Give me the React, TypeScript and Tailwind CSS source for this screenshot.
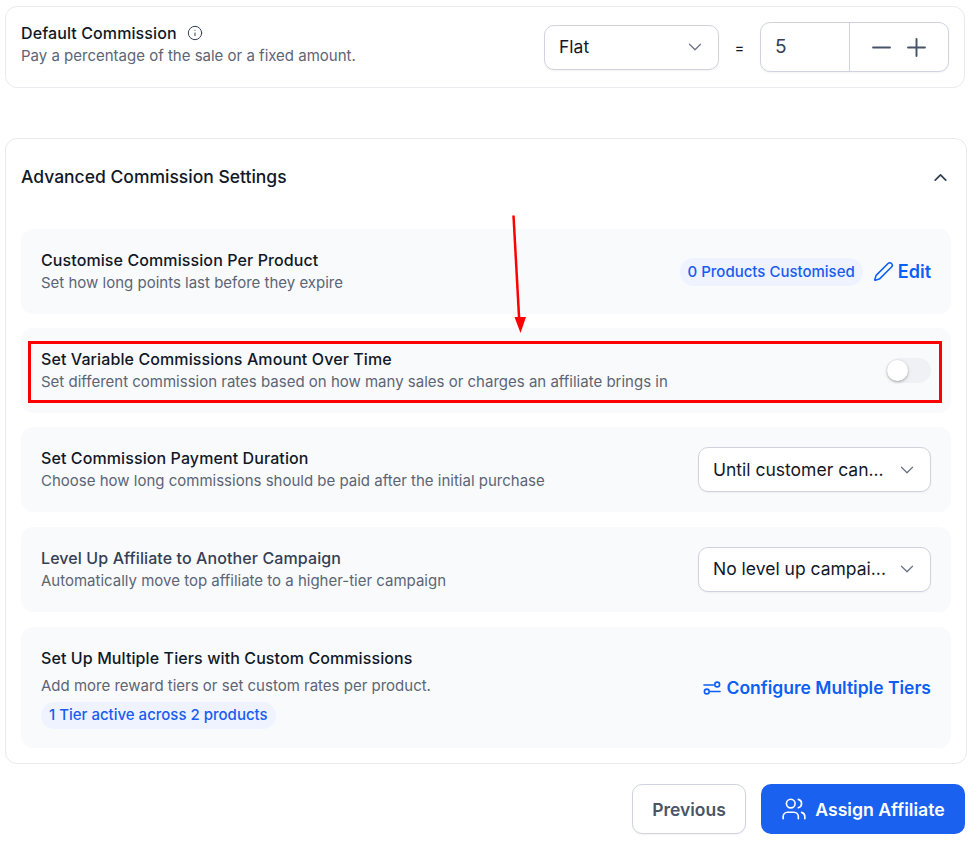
import { ChevronDown, ChevronUp, Info, Minus, Pen, Plus, Users } from "lucide-react";

const inter = "font-['Inter',sans-serif]";

function SelectBox({ label, className }: { label: string; className: string }) {
  return (
    <div className={`flex items-center justify-between rounded-[10px] border border-[#d0d3de] bg-white pl-[14px] pr-3 shadow-[0_1px_2px_rgba(16,24,40,0.05)] ${className}`}>
      <span className="text-[17.5px] leading-6 text-[#111827]">{label}</span>
      <ChevronDown className="h-[22px] w-[22px] text-[#667085]" strokeWidth={1.3} />
    </div>
  );
}

function Row({ title, desc, children, titleColor = "text-[#111827]" }: { title: string; desc: string; children: React.ReactNode; titleColor?: string }) {
  return (
    <div className="flex h-[85px] items-center justify-between rounded-xl bg-[#f9fafc] pl-5 pr-5">
      <div>
        <div className={`text-[16px] font-medium leading-[22px] tracking-[0.1px] ${titleColor}`}>{title}</div>
        <div className="text-[15px] leading-[23px] text-[#5c6575]">{desc}</div>
      </div>
      {children}
    </div>
  );
}

export default function App() {
  return (
    <div className={`relative h-[843px] w-[978px] overflow-hidden bg-white pl-[5px] pt-[6px] ${inter}`}>
      <div className="flex h-[82px] w-[960px] items-center justify-between rounded-xl border border-[#e9eaee] bg-white pl-[15px] pr-[15px]">
        <div className="pb-[5px]">
          <div className="flex items-center gap-[10px]">
            <span className="text-[16px] font-medium leading-[22px] tracking-[0.1px] text-[#111827]">Default Commission</span>
            <Info className="h-4 w-4 text-[#344054]" strokeWidth={1.5} />
          </div>
          <div className="text-[15px] leading-[23px] text-[#5c6575]">Pay a percentage of the sale or a fixed amount.</div>
        </div>
        <div className="flex items-center">
          <SelectBox label="Flat" className="h-[45px] w-[175px]" />
          <span className="w-[41px] text-center text-[14px] font-medium text-[#111827]">=</span>
          <div className="flex h-[50px] w-[189px] items-center rounded-[10px] border border-[#d0d3de] bg-white shadow-[0_1px_2px_rgba(16,24,40,0.05)]">
            <div className="flex h-full w-[89px] items-center border-r border-[#d0d3de] pl-[14px] text-[19px] text-[#344054]">5</div>
            <div className="flex flex-1 items-center justify-center gap-[6px]">
              <Minus className="h-[29px] w-[29px] text-[#475467]" strokeWidth={1.6} />
              <Plus className="h-[29px] w-[29px] text-[#475467]" strokeWidth={1.6} />
            </div>
          </div>
        </div>
      </div>

      <div className="mt-[50px] h-[626px] w-[962px] rounded-xl border border-[#e9eaee] bg-white px-[15px]">
        <div className="flex h-[90px] items-center justify-between pb-[14px]">
          <span className="text-[17.5px] font-medium text-[#111827]">Advanced Commission Settings</span>
          <ChevronUp className="h-[21px] w-[21px] text-[#344054]" strokeWidth={2} />
        </div>
        <div className="flex flex-col gap-[14.2px]">
          <Row title="Customise Commission Per Product" desc="Set how long points last before they expire">
            <div className="flex items-center">
              <span className="flex h-7 items-center rounded-full bg-[#eef3ff] px-2 pt-px text-[15px] font-medium text-[#1a5cf0]">0 Products Customised</span>
              <span className="ml-[10px] flex items-center gap-1 text-[18px] font-semibold text-[#0d5ef4]">
                <Pen className="h-[21px] w-[21px]" strokeWidth={1.75} />
                Edit
              </span>
            </div>
          </Row>
          <Row title="Set Variable Commissions Amount Over Time" desc="Set different commission rates based on how many sales or charges an affiliate brings in">
            <div className="relative h-[25px] w-11 rounded-full bg-[#f0f1f5]">
              <div className="absolute left-0 top-[2px] h-[21px] w-[21px] rounded-full bg-white shadow-[0_1px_3px_rgba(0,0,0,0.35)]" />
            </div>
          </Row>
          <Row title="Set Commission Payment Duration" desc="Choose how long commissions should be paid after the initial purchase">
            <SelectBox label="Until customer can..." className="h-[45px] w-[233px]" />
          </Row>
          <Row title="Level Up Affiliate to Another Campaign" desc="Automatically move top affiliate to a higher-tier campaign" titleColor="text-[#344054]">
            <SelectBox label="No level up campai..." className="h-[45px] w-[233px]" />
          </Row>
          <div className="mt-px flex h-[121px] items-center justify-between rounded-xl bg-[#f9fafc] pl-5 pr-5">
            <div className="pt-px">
              <div className="text-[16px] font-medium leading-[22px] tracking-[0.1px] text-[#111827]">Set Up Multiple Tiers with Custom Commissions</div>
              <div className="mt-[6px] text-[15px] leading-[22px] text-[#5c6575]">Add more reward tiers or set custom rates per product.</div>
              <span className="mt-[5px] flex h-[27px] w-fit items-center rounded-full bg-[#eef3ff] px-2 text-[15px] font-medium text-[#1a5cf0]">1 Tier active across 2 products</span>
            </div>
            <span className="flex items-center gap-[6px] pt-[2px] text-[17.5px] font-semibold text-[#0d5ef4]">
              <svg width="18" height="14" viewBox="0 0 18 14" fill="none" stroke="currentColor" strokeWidth="1.6" strokeLinecap="round">
                <path d="M1 4h9.5" />
                <circle cx="14.2" cy="3.5" r="2.4" />
                <path d="M7.5 10.5H17" />
                <circle cx="3.8" cy="10.5" r="2.4" />
              </svg>
              Configure Multiple Tiers
            </span>
          </div>
        </div>
      </div>

      <div className="mt-5 flex w-[960px] justify-end gap-[15px]">
        <button className="h-[50px] w-[114px] rounded-[10px] border border-[#d0d3de] bg-white pt-[2px] text-[17.5px] font-semibold text-[#4b5565] shadow-[0_1px_2px_rgba(16,24,40,0.05)]">Previous</button>
        <button className="flex h-[50px] w-[204px] items-center justify-center gap-2 rounded-[10px] bg-[#1a61f0] text-[17.7px] font-semibold text-white">
          <Users className="h-[26px] w-[26px]" strokeWidth={1.5} />
          <span className="pt-[2px]">Assign Affiliate</span>
        </button>
      </div>

      {/* annotation on top of the screenshot */}
      <div className="absolute left-[28px] top-[341px] h-[62px] w-[914px] border-[3px] border-[#ff0000]" />
      <svg className="absolute left-[500px] top-[210px]" width="40" height="125" viewBox="0 0 40 125" fill="none">
        <path d="M13.5 5.5 L19.2 110" stroke="#ff0000" strokeWidth="2.5" />
        <path d="M14.5 107 L26 107 L20.5 123 Z" fill="#ff0000" />
      </svg>
    </div>
  );
}
